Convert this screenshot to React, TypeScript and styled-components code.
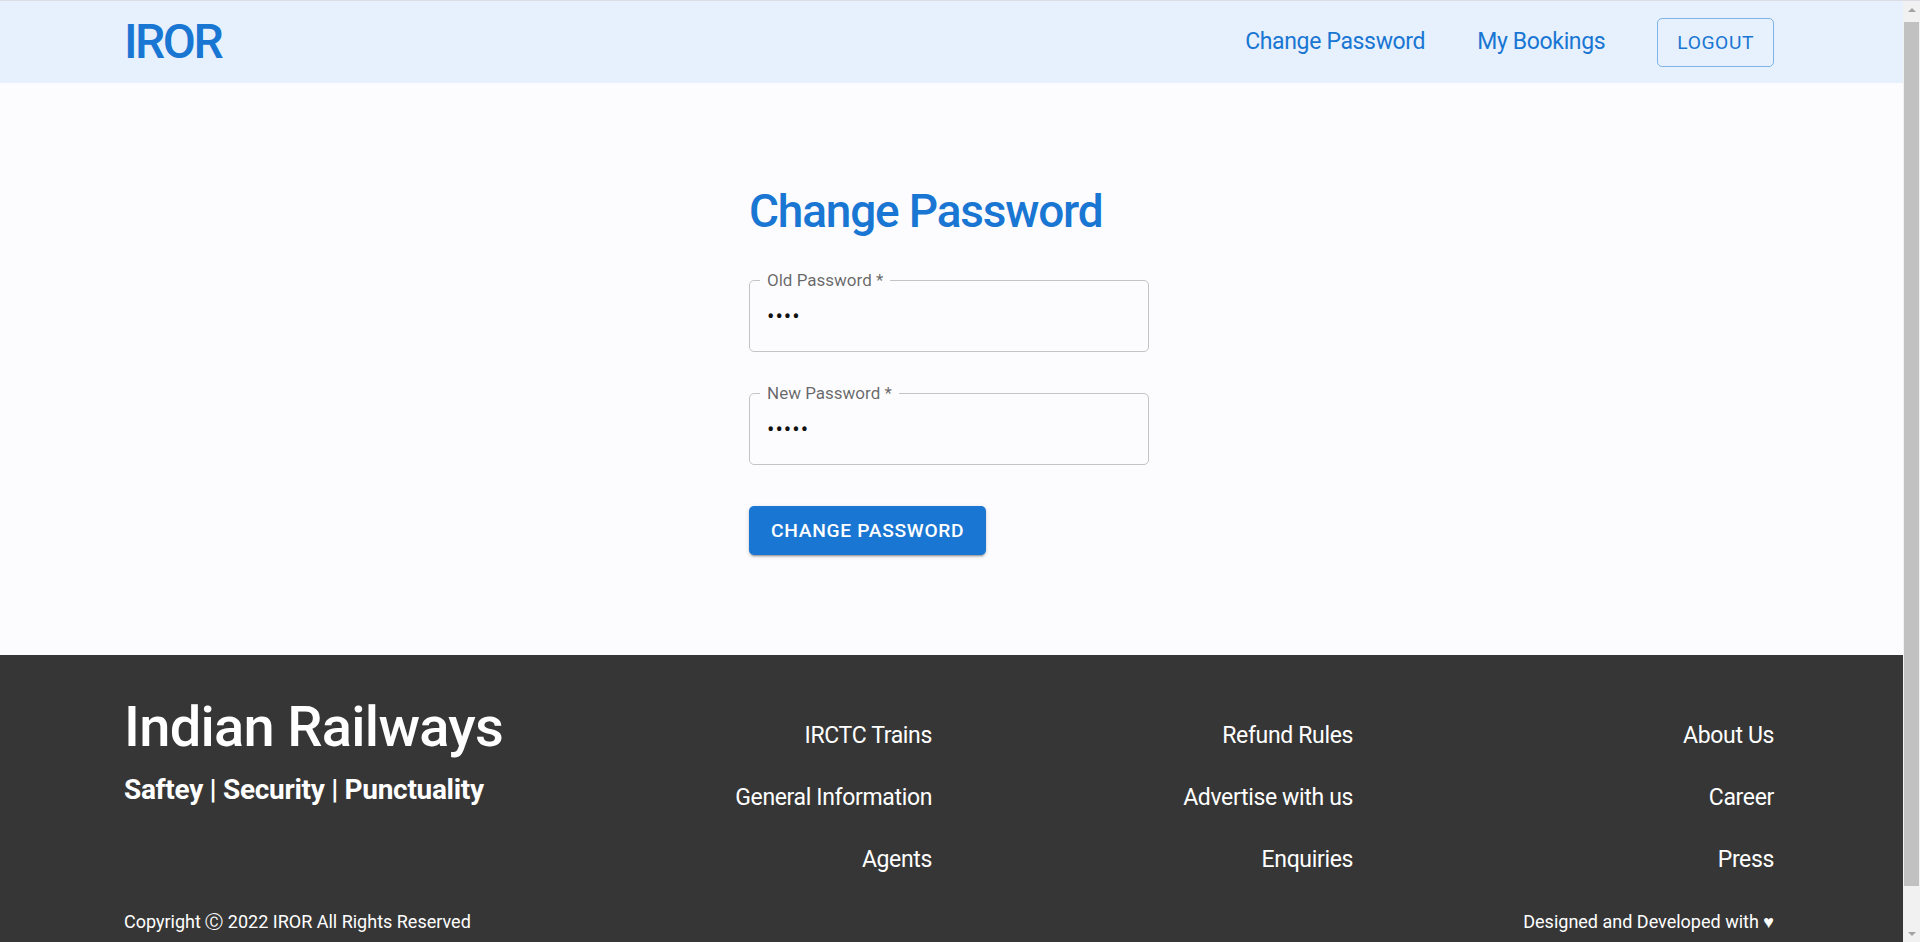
import React from "react";
import styled, { createGlobalStyle } from "styled-components";

const GlobalStyle = createGlobalStyle`
  html, body { margin: 0; padding: 0; }
  body {
    background: #fcfcfe;
    font-family: Roboto, "Noto Sans", "Liberation Sans", sans-serif;
    color: #1f1f1f;
  }
  * { box-sizing: border-box; }
`;

const Page = styled.div`
  display: flex;
  flex-direction: column;
  min-height: 100vh;
  margin-right: 22px;
`;

const Header = styled.header`
  background: #e7f1fe;
  border-top: 1px solid #dadde2;
  margin-right: -22px;
  padding-right: 22px;
`;

const Bar = styled.div`
  height: 82px;
  margin: 0 124px;
  display: flex;
  align-items: center;
  justify-content: space-between;
`;

const Logo = styled.div`
  font-size: 48px;
  font-weight: 500;
  letter-spacing: -2.5px;
  color: #1976d2;
  line-height: 1;
`;

const Nav = styled.nav`
  display: flex;
  align-items: center;
  gap: 52px;
`;

const NavLink = styled.a`
  font-size: 23px;
  letter-spacing: -0.35px;
  color: #1976d2;
  text-decoration: none;
  line-height: 1.5;
  cursor: pointer;
`;

const OutlineButton = styled.button`
  height: 49px;
  padding: 0 19px;
  font-family: inherit;
  font-size: 19.2px;
  font-weight: 400;
  letter-spacing: 0.6px;
  text-transform: uppercase;
  color: #1976d2;
  background: transparent;
  border: 1px solid rgba(25, 118, 210, 0.5);
  border-radius: 5px;
  cursor: pointer;
`;

const Main = styled.main`
  display: flex;
  justify-content: center;
  padding: 100px 0;
`;

const Form = styled.form`
  width: 400px;
  display: flex;
  flex-direction: column;
  align-items: flex-start;
  gap: 41px;
`;

const Title = styled.h1`
  margin: 0;
  font-size: 46px;
  font-weight: 500;
  letter-spacing: -1.2px;
  line-height: 56px;
  color: #1976d2;
`;

const Field = styled.fieldset`
  width: 100%;
  height: 81px;
  margin: -9px 0 0;
  padding: 0 17px;
  border: 1px solid #c4c4c4;
  border-radius: 5px;
`;

const Legend = styled.legend`
  margin-left: -7px;
  padding: 0 7px;
  font-size: 17px;
  line-height: 18px;
  color: rgba(0, 0, 0, 0.6);
`;

const Input = styled.input`
  display: block;
  width: 100%;
  height: 62px;
  margin: 0;
  padding: 0 0 8px;
  border: none;
  outline: none;
  background: transparent;
  font-family: inherit;
  font-size: 22px;
  color: #111;
  letter-spacing: 1px;
`;

const PrimaryButton = styled.button`
  height: 49px;
  padding: 0 22px;
  font-family: inherit;
  font-size: 19.2px;
  font-weight: 500;
  letter-spacing: 0.7px;
  text-transform: uppercase;
  color: #fff;
  background: #1976d2;
  border: none;
  border-radius: 5px;
  box-shadow: 0px 3px 1px -2px rgba(0, 0, 0, 0.2), 0px 2px 2px 0px rgba(0, 0, 0, 0.14),
    0px 1px 5px 0px rgba(0, 0, 0, 0.12);
  cursor: pointer;
`;

const Footer = styled.footer`
  background: #363636;
  color: #fff;
  padding: 39px 0 55px;
  margin-right: -22px;
  padding-right: 22px;
`;

const FooterInner = styled.div`
  margin: 0 124px;
  display: flex;
  flex-direction: column;
  gap: 30px;
`;

const FooterGrid = styled.div`
  display: grid;
  grid-template-columns: repeat(4, 1fr);
  column-gap: 34px;
`;

const Brand = styled.div`
  display: flex;
  flex-direction: column;
  gap: 12px;
`;

const BrandTitle = styled.div`
  font-size: 56px;
  font-weight: 500;
  letter-spacing: -0.7px;
  line-height: 1.2;
  white-space: nowrap;
`;

const Tagline = styled.div`
  font-size: 28px;
  font-weight: 700;
  letter-spacing: -0.3px;
  line-height: 1.2;
  white-space: nowrap;
`;

const LinkColumn = styled.div`
  display: flex;
  flex-direction: column;
  align-items: flex-end;
  gap: 26px;
  padding-top: 24px;
`;

const FooterLink = styled.a`
  font-size: 23px;
  letter-spacing: -0.35px;
  line-height: 36px;
  color: #fff;
  text-decoration: none;
  cursor: pointer;
`;

const BottomBar = styled.div`
  display: flex;
  justify-content: space-between;
  font-size: 18px;
  line-height: 27px;
`;

/* Browser scrollbar as it appears in the screenshot */
const ScrollTrack = styled.div`
  position: fixed;
  top: 1px;
  right: 0;
  bottom: 0;
  width: 17px;
  background: #f1f1f1;
  display: flex;
  flex-direction: column;
  align-items: center;
`;

const ScrollArrow = styled.div<{ $down?: boolean }>`
  height: 17px;
  width: 17px;
  display: flex;
  align-items: center;
  justify-content: center;
  &::after {
    content: "";
    border-left: 4px solid transparent;
    border-right: 4px solid transparent;
    ${(p) => (p.$down ? "border-top: 4px solid #a3a3a3;" : "border-bottom: 4px solid #a3a3a3;")}
  }
`;

const ScrollThumb = styled.div`
  width: 15px;
  flex: 0 0 864px;
  margin-top: 4px;
  background: #c1c1c1;
`;

const Spacer = styled.div`
  flex: 1;
`;

const columns = [
  ["IRCTC Trains", "General Information", "Agents"],
  ["Refund Rules", "Advertise with us", "Enquiries"],
  ["About Us", "Career", "Press"],
];

function PasswordField({ label, value }: { label: string; value: string }) {
  return (
    <Field>
      <Legend>{label}</Legend>
      <Input type="password" value={value} readOnly />
    </Field>
  );
}

export default function App() {
  return (
    <>
      <GlobalStyle />
      <Page>
        <Header>
          <Bar>
            <Logo>IROR</Logo>
            <Nav>
              <NavLink>Change Password</NavLink>
              <NavLink>My Bookings</NavLink>
              <OutlineButton>Logout</OutlineButton>
            </Nav>
          </Bar>
        </Header>
        <Main>
          <Form onSubmit={(e) => e.preventDefault()}>
            <Title>Change Password</Title>
            <PasswordField label="Old Password *" value="1234" />
            <PasswordField label="New Password *" value="12345" />
            <PrimaryButton type="submit">Change Password</PrimaryButton>
          </Form>
        </Main>
        <Footer>
          <FooterInner>
            <FooterGrid>
              <Brand>
                <BrandTitle>Indian Railways</BrandTitle>
                <Tagline>Saftey | Security | Punctuality</Tagline>
              </Brand>
              {columns.map((col, i) => (
                <LinkColumn key={i}>
                  {col.map((l) => (
                    <FooterLink key={l}>{l}</FooterLink>
                  ))}
                </LinkColumn>
              ))}
            </FooterGrid>
            <BottomBar>
              <span>Copyright Ⓒ 2022 IROR All Rights Reserved</span>
              <span>Designed and Developed with ♥</span>
            </BottomBar>
          </FooterInner>
        </Footer>
      </Page>
      <ScrollTrack aria-hidden>
        <ScrollArrow />
        <ScrollThumb />
        <Spacer />
        <ScrollArrow $down />
      </ScrollTrack>
    </>
  );
}
